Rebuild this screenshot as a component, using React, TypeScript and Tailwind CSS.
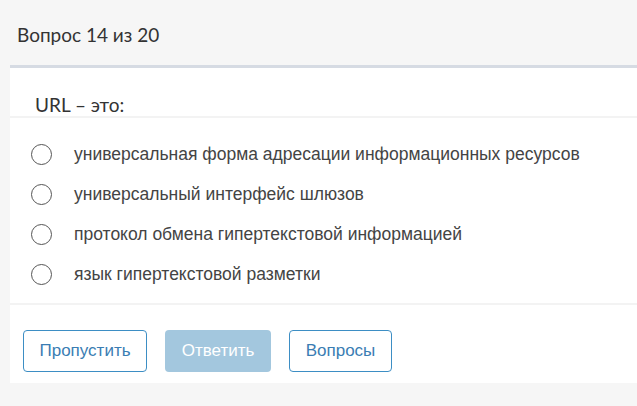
const options = [
  "универсальная форма адресации информационных ресурсов",
  "универсальный интерфейс шлюзов",
  "протокол обмена гипертекстовой информацией",
  "язык гипертекстовой разметки",
];

export default function App() {
  return (
    <div className="h-[406px] w-full overflow-hidden bg-[#f6f6f6]">
      <div className="pl-[17px] pt-[24px] font-['Lato',sans-serif] text-[19px] leading-[22px] text-[#333]">
        Вопрос 14 из 20
      </div>

      <div className="ml-[10px] mt-[19px] border-t-[3px] border-[#d6dbe3] bg-white">
        <div className="border-b-2 border-[#f3f3f3] pl-[25px] pt-[26px] font-['Lato',sans-serif] text-[19px] leading-[22px] text-[#333]">
          URL – это:
        </div>

        <ul className="border-b-2 border-[#f3f3f3] pb-[9px] pt-[16px] font-['Liberation_Sans',Arial,sans-serif]">
          {options.map((o) => (
            <li key={o} className="flex h-[40px] items-center pl-[21px]">
              <span className="h-[21px] w-[21px] shrink-0 rounded-full border-[1.5px] border-[#555]" />
              <span className="ml-[22px] text-[17.5px] text-[#444]">{o}</span>
            </li>
          ))}
        </ul>

        <div className="flex gap-[18px] pb-[11px] pl-[13px] pt-[25px] font-['Liberation_Sans',Arial,sans-serif] text-[17px]">
          <button className="h-[42px] w-[124px] rounded-[4px] border border-[#3d8ec4] text-[#3a7db3]">
            Пропустить
          </button>
          <button className="h-[42px] w-[106px] rounded-[4px] bg-[#a3c7de] text-white">
            Ответить
          </button>
          <button className="h-[42px] w-[103px] rounded-[4px] border border-[#3d8ec4] text-[#3a7db3]">
            Вопросы
          </button>
        </div>
      </div>
    </div>
  );
}
